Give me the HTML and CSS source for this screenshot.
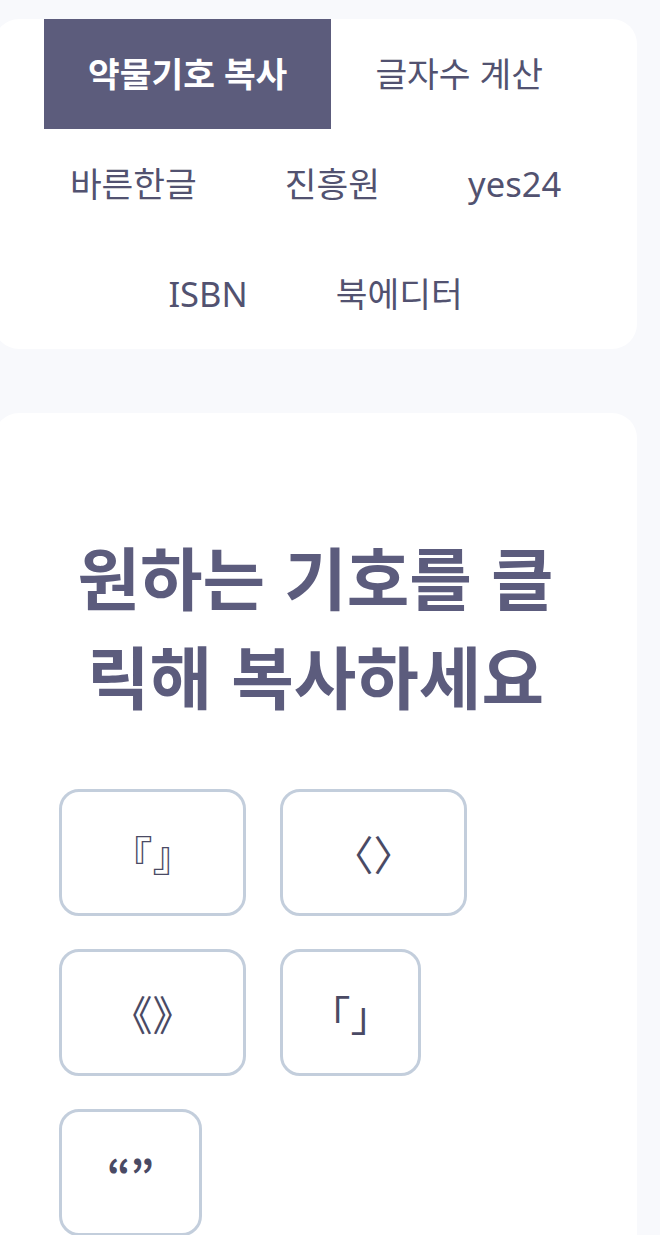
FILE: index.html
```html
<!DOCTYPE html>
<html lang="ko">
<head>
<meta charset="utf-8">
<title>약물기호 복사</title>
<link rel="stylesheet" href="styles.css">
</head>
<body>
<div class="page">
  <nav class="card tabs">
    <a class="tab active">약물기호 복사</a>
    <a class="tab">글자수 계산</a>
    <a class="tab">바른한글</a>
    <a class="tab">진흥원</a>
    <a class="tab">yes24</a>
    <a class="tab">ISBN</a>
    <a class="tab">북에디터</a>
  </nav>
  <main class="card panel">
    <h1 class="title">원하는 기호를 클릭해 복사하세요</h1>
    <div class="symbols">
      <button class="sym sym-w">『』</button>
      <button class="sym sym-w">〈〉</button>
      <button class="sym sym-w">《》</button>
      <button class="sym sym-n">「」</button>
      <button class="sym sym-q">“”</button>
    </div>
  </main>
</div>
</body>
</html>
```
FILE: styles.css
```css
html, body {
  margin: 0;
  padding: 0;
  background: #f8f9fc;
}
body {
  font-family: "Noto Sans", "Noto Sans CJK KR", sans-serif;
  color: #525270;
  overflow: hidden;
}
.page {
  margin-left: -6px;
  padding: 19px 23px 0 0;
  display: flex;
  flex-direction: column;
  gap: 64px;
}
.card {
  background: #ffffff;
  border-radius: 25px;
}
.tabs {
  display: flex;
  flex-wrap: wrap;
  justify-content: center;
}
.tab {
  display: block;
  height: 110px;
  line-height: 110px;
  padding: 0 44px;
  font-size: 34.5px;
  color: #525270;
  white-space: nowrap;
}
.tab.active {
  background: #5c5c7c;
  color: #ffffff;
  font-weight: 700;
}
.panel {
  padding: 113px 65px 120px;
}
.title {
  margin: 0 0 65px;
  font-family: "Noto Sans CJK KR", sans-serif;
  font-size: 68px;
  line-height: 99px;
  font-weight: 700;
  color: #5c5c7d;
  text-align: center;
}
.symbols {
  display: flex;
  flex-wrap: wrap;
  gap: 33px 34px;
}
.sym {
  box-sizing: border-box;
  height: 127px;
  border: 3px solid #c3cedc;
  border-radius: 20px;
  background: #ffffff;
  display: flex;
  align-items: center;
  justify-content: center;
  padding: 0;
  font-family: "Noto Sans CJK KR", sans-serif;
  font-size: 41px;
  color: #4a4a64;
}
.sym-w { width: 187px; }
.sym-n { width: 141px; }
.sym-q { width: 143px; font-weight: 700; }
```
